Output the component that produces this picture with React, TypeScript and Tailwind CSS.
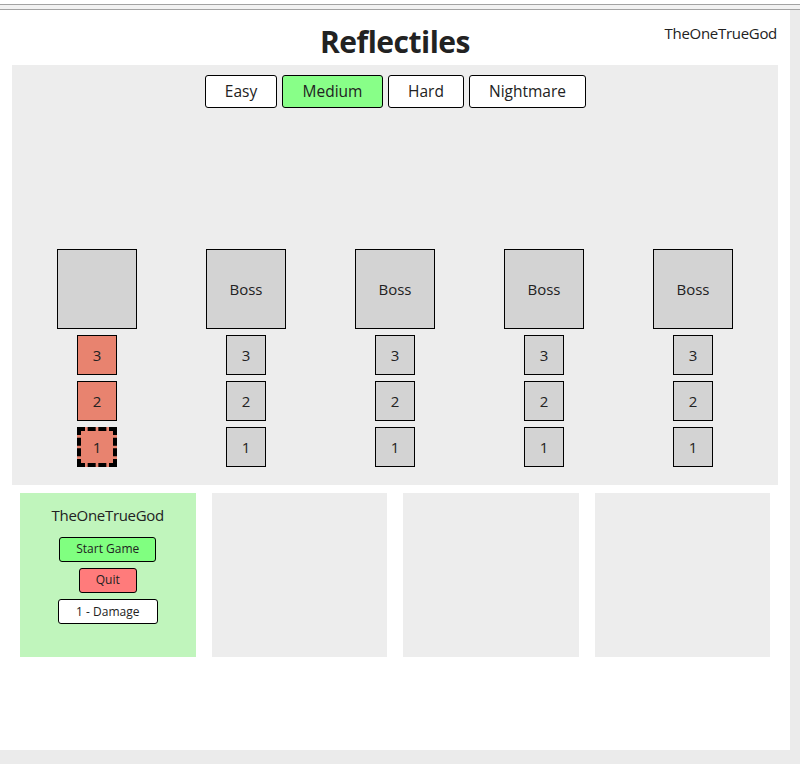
import React from 'react';

const difficulties = [
  { name: 'Easy', w: 'w-[72px]' },
  { name: 'Medium', w: 'w-[101px]' },
  { name: 'Hard', w: 'w-[76px]' },
  { name: 'Nightmare', w: 'w-[117px]' },
];
const columns = [
  { label: '', mine: true },
  { label: 'Boss', mine: false },
  { label: 'Boss', mine: false },
  { label: 'Boss', mine: false },
  { label: 'Boss', mine: false },
];

function Tile({ n, mine, selected }: { n: number; mine: boolean; selected?: boolean }) {
  return (
    <div
      className={
        'w-[40px] h-[40px] flex items-center justify-center text-[15px] ' +
        (mine ? 'bg-[#e8836f] ' : 'bg-[#d3d3d3] ') +
        (selected ? 'border-4 border-dashed border-black' : 'border border-black')
      }
    >
      {n}
    </div>
  );
}

export default function App() {
  return (
    <div
      className="w-[800px] h-[764px] bg-white text-[#222] overflow-hidden"
      style={{ fontFamily: '"Open Sans", "Noto Sans", sans-serif' }}
    >
      <div className="h-[4px] bg-white" />
      <div className="h-[6px] bg-[#f2f2f2] border-y border-[#a3a3a3]" />
      <div className="flex h-[740px]">
        <main className="w-[790px] bg-white">
          {/* Header */}
          <div className="grid grid-cols-[1fr_auto_1fr] h-[55px]">
            <div />
            <h1 className="text-[30px] font-bold leading-none pt-[17px] tracking-[-0.5px]">Reflectiles</h1>
            <div className="text-right pr-[13px] pt-[12px] text-[15px] tracking-[-0.3px]">TheOneTrueGod</div>
          </div>

          {/* Board */}
          <section className="mx-[12px] h-[420px] bg-[#ededed] pt-[10px]">
            <div className="flex justify-center gap-[5px] pl-[1px]">
              {difficulties.map((d) => (
                <button
                  key={d.name}
                  className={
                    'h-[33px] border border-black rounded-[3px] text-[15.5px] ' +
                    d.w +
                    (d.name === 'Medium' ? ' bg-[#88ff88]' : ' bg-white')
                  }
                >
                  {d.name}
                </button>
              ))}
            </div>

            <div className="grid grid-cols-5 w-[745px] mx-auto mt-[141px]">
              {columns.map((c, i) => (
                <div key={i} className="flex flex-col items-center gap-[6px]">
                  <div className="w-[80px] h-[80px] bg-[#d3d3d3] border border-black flex items-center justify-center text-[15px]">
                    {c.label}
                  </div>
                  <Tile n={3} mine={c.mine} />
                  <Tile n={2} mine={c.mine} />
                  <Tile n={1} mine={c.mine} selected={c.mine} />
                </div>
              ))}
            </div>
          </section>

          {/* Players */}
          <div className="mx-[20px] mt-[8px] grid grid-cols-4 gap-[16px]">
            <div className="h-[164px] bg-[#c0f5bc] flex flex-col items-center pt-[11px]">
              <div className="text-[15px] tracking-[-0.3px] mb-[10px]">TheOneTrueGod</div>
              <div className="flex flex-col items-center gap-[6px] text-[12px]">
                <button className="h-[25px] w-[97px] bg-[#80ff80] border border-black rounded-[3px]">Start Game</button>
                <button className="h-[25px] w-[58px] bg-[#ff7b7b] border border-black rounded-[3px]">Quit</button>
                <button className="h-[25px] w-[100px] bg-white border border-black rounded-[3px] pt-[2px]">1 - Damage</button>
              </div>
            </div>
            <div className="h-[164px] bg-[#ededed]" />
            <div className="h-[164px] bg-[#ededed]" />
            <div className="h-[164px] bg-[#ededed]" />
          </div>
        </main>
        <div className="flex-1 bg-[#ebebeb]" />
      </div>
      <div className="h-[14px] bg-[#ebebeb]" />
    </div>
  );
}
